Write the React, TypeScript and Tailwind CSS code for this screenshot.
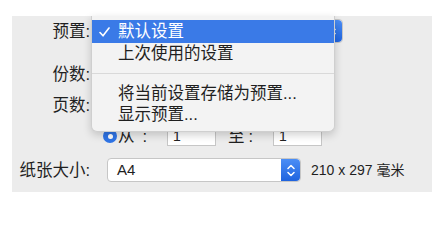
import React from 'react'

const font = { fontFamily: '"Liberation Sans", "Noto Sans CJK SC", sans-serif' }

function Stepper({ w }: { w: string }) {
    return (
        <div className={`${w} h-full flex items-center justify-center rounded-r-[4px] bg-gradient-to-b from-[#4b8ef6] to-[#1e63de]`}>
            <svg width="8" height="13" viewBox="0 0 8 13" fill="none" stroke="white" strokeWidth="1.5" strokeLinecap="round" strokeLinejoin="round">
                <path d="M1 4.5 L4 1.5 L7 4.5" />
                <path d="M1 8.5 L4 11.5 L7 8.5" />
            </svg>
        </div>
    )
}

function Field({ value, w }: { value?: string; w: string }) {
    return (
        <div className={`${w} h-[19px] bg-white border border-[#c6c6c6] pl-[5px] text-[14px] leading-[17px] text-[#222]`}>
            {value}
        </div>
    )
}

function Radio() {
    return (
        <div className="w-[14px] h-[14px] rounded-full bg-[#2f74e6] flex items-center justify-center">
            <div className="w-[5px] h-[5px] rounded-full bg-white" />
        </div>
    )
}

export default function App() {
    return (
        <div className="min-h-screen bg-white pt-4 pl-3 text-[#1f1f1f]" style={font}>
            <div className="relative w-[420px] bg-[#ececec] pt-[3px] pb-[10px]">
                {/* 预置 */}
                <div className="flex items-center h-[24px]">
                    <div className="w-[78px] text-right text-[16.5px]">预置:</div>
                    <div className="ml-[17px] w-[236px] h-full flex rounded-[4px] bg-white border border-[#c6c6c6]">
                        <div className="flex-1" />
                        <Stepper w="w-[20px]" />
                    </div>
                </div>

                {/* 份数 */}
                <div className="mt-[19px] flex items-center h-[24px]">
                    <div className="w-[78px] text-right text-[16.5px]">份数:</div>
                    <div className="ml-[17px]">
                        <Field w="w-[50px]" />
                    </div>
                </div>

                {/* 页数 */}
                <div className="mt-[7px] flex items-center h-[24px]">
                    <div className="w-[78px] text-right text-[16.5px]">页数:</div>
                    <div className="ml-[13px] w-[14px] h-[14px] rounded-full bg-white border border-[#bdbdbd]" />
                </div>

                {/* 从 / 至 */}
                <div className="mt-[9px] flex items-center h-[20px] pl-[91px] text-[16.5px]">
                    <Radio />
                    <div className="w-[50px] pl-[1px] flex items-center">
                        <span>从</span>
                        <span className="ml-[8px]">:</span>
                    </div>
                    <Field value="1" w="w-[49px]" />
                    <div className="ml-[12px] w-[45px] flex items-center">
                        <span>至</span>
                        <span className="ml-[4px]">:</span>
                    </div>
                    <Field value="1" w="w-[49px]" />
                </div>

                {/* 纸张大小 */}
                <div className="mt-[12px] flex items-center h-[24px]">
                    <div className="w-[78px] text-right text-[16.5px]">纸张大小:</div>
                    <div className="ml-[17px] w-[194px] h-full flex rounded-[4px] bg-white border border-[#c6c6c6]">
                        <div className="flex-1 pl-[9px] text-[15px] leading-[22px]">A4</div>
                        <Stepper w="w-[19px]" />
                    </div>
                    <div className="ml-[10px] text-[14px]">210 x 297 毫米</div>
                </div>

                {/* popup menu */}
                <div className="absolute left-[79px] top-0 w-[244px] pt-[4px] pb-[6px] bg-[#f3f3f3] rounded-b-[6px] border-x border-b border-[#cfcfcf] shadow-[0_3px_8px_rgba(0,0,0,0.18)] text-[16.5px]">
                    <div className="relative h-[23px] bg-[#3a7ae7] text-white pl-[26px] leading-[23px]">
                        <svg className="absolute left-[7px] top-[7px]" width="11" height="10" viewBox="0 0 11 10" fill="none" stroke="white" strokeWidth="1.6" strokeLinecap="round" strokeLinejoin="round">
                            <path d="M1 5.5 L4 8.8 L10 1" />
                        </svg>
                        默认设置
                    </div>
                    <div className="h-[21px] pl-[26px] leading-[21px]">上次使用的设置</div>
                    <div className="h-[19px] flex items-center">
                        <div className="w-full h-px bg-[#d9d9d9]" />
                    </div>
                    <div className="h-[21px] pl-[26px] leading-[21px]">将当前设置存储为预置...</div>
                    <div className="h-[21px] pl-[26px] leading-[21px]">显示预置...</div>
                </div>
            </div>
        </div>
    )
}
